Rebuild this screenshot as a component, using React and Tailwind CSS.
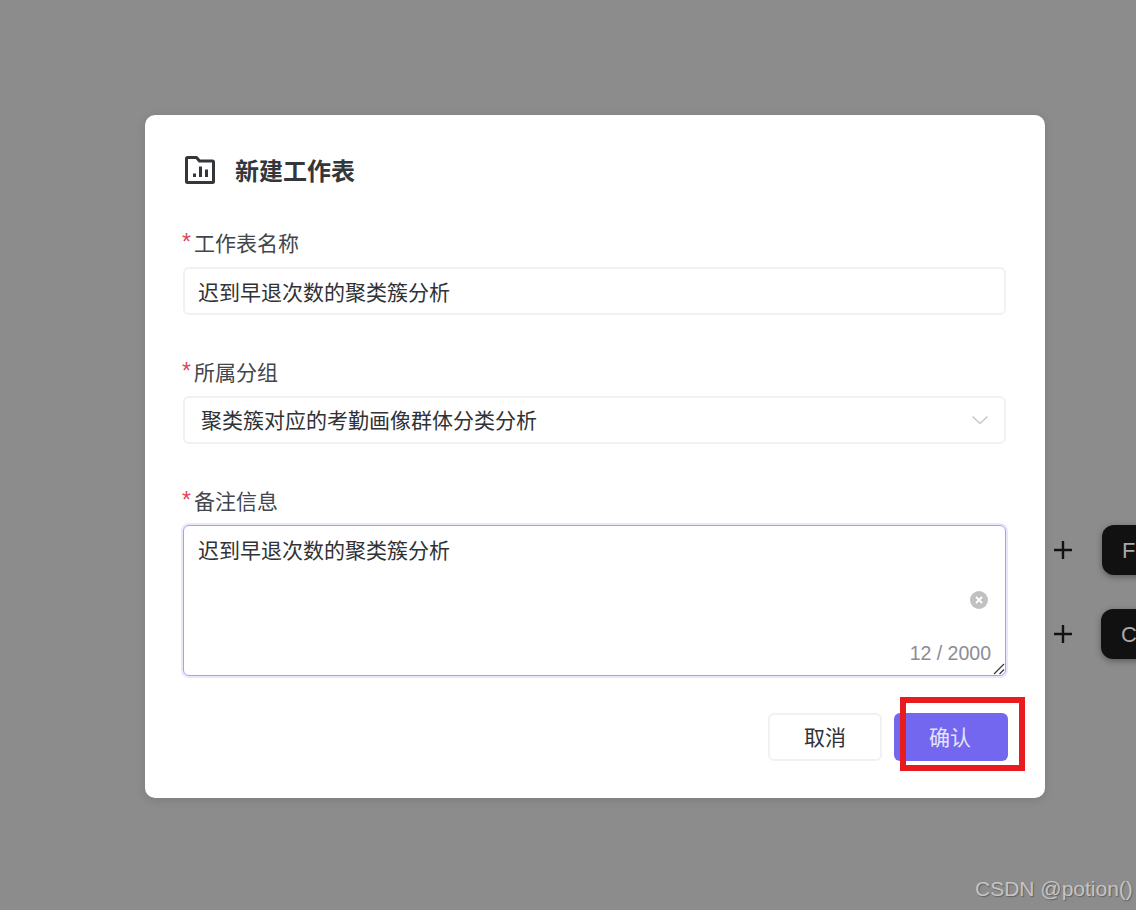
import React from 'react';

const cjk = "font-['Microsoft_YaHei','Noto_Sans_CJK_SC','Noto_Sans',sans-serif]";

const FolderChartIcon = () => (
  <svg width="30" height="28" viewBox="0 0 30 28" fill="none" className="shrink-0">
    <path d="M1.500 2.500 a1 1 0 0 1 1-1 H11.500 L14.500 5 H27.500 a1 1 0 0 1 1 1 V25.500 a1 1 0 0 1-1 1 H2.500 a1 1 0 0 1-1-1 Z" stroke="#33363b" strokeWidth="3" strokeLinejoin="round" />
    <path d="M9.500 17.500v3.500M15.500 10.500v10.500M21.500 13.500v7.500" stroke="#33363b" strokeWidth="3" />
  </svg>
);

const Label = ({ children, className = '' }) => (
  <div className={`flex items-center h-[30px] text-[21px] leading-[30px] text-[#43464c] ${className}`}>
    <span className="-ml-[1px] w-[12px] text-[#e0465a] text-[23px] font-['Liberation_Sans',sans-serif]">*</span>
    {children}
  </div>
);

const Chip = ({ letter, offset, className }) => (
  <div className={`absolute flex items-center ${offset} ${className}`}>
    <svg width="20" height="20" viewBox="0 0 20 20" className="shrink-0">
      <path d="M10 1v18M1 10h18" stroke="#111214" strokeWidth="2.400" />
    </svg>
    <div className="w-[80px] h-[50px] rounded-[12px] bg-[#111111] shadow-[0_2px_6px_rgba(0,0,0,0.35)] flex items-center pl-[20px] text-[22px] text-[#a8a8a8] font-['Liberation_Sans',sans-serif]">
      {letter}
    </div>
  </div>
);

export default function App() {
  return (
    <div className={`relative w-[1136px] h-[910px] overflow-hidden bg-[#8c8c8c] pt-[115px] pl-[145px] ${cjk}`}>
      <Chip letter="F" offset="gap-[29px]" className="left-[1053px] top-[525px]" />
      <Chip letter="C" offset="gap-[28px]" className="left-[1053px] top-[609px]" />

      <div className="relative w-[900px] h-[683px] bg-white rounded-[10px] shadow-[0_2px_10px_rgba(0,0,0,0.12)] pt-[40px] pl-[38px] pr-[37px]">
        <div className="flex items-center h-[30px] pl-[2px] gap-[20px]">
          <FolderChartIcon />
          <h2 className="text-[24px] font-bold leading-[30px] text-[#33363b]">新建工作表</h2>
        </div>

        <Label className="mt-[42px]">工作表名称</Label>
        <div className="mt-[10px] w-[823px] h-[48px] rounded-[6px] border-2 border-[#f0f1f3] flex items-center px-[13px] pt-[1px] text-[21px] text-[#303236]">
          迟到早退次数的聚类簇分析
        </div>

        <Label className="mt-[41px]">所属分组</Label>
        <div className="mt-[10px] w-[823px] h-[48px] rounded-[6px] border-2 border-[#f0f1f3] flex items-center justify-between pl-[16px] pr-[15px] text-[21px] text-[#303236]">
          <span>聚类簇对应的考勤画像群体分类分析</span>
          <svg width="18" height="12" viewBox="0 0 18 12" fill="none">
            <path d="M1.500 2.500 9 9.500l7.500-7" stroke="#c9cacc" strokeWidth="1.600" />
          </svg>
        </div>

        <Label className="mt-[41px]">备注信息</Label>
        <div className="relative mt-[10px] w-[823px] h-[151px] rounded-[6px] border border-[#a89ef5] shadow-[0_0_0_2px_#e9e7fc] px-[14px] pt-[8px] text-[21px] leading-[30px] text-[#303236]">
          迟到早退次数的聚类簇分析
          <span className="absolute right-[17px] top-[65px] w-[18px] h-[18px] rounded-full bg-[#c1c1c1] flex items-center justify-center">
            <svg width="8" height="8" viewBox="0 0 8 8">
              <path d="M1 1l6 6M7 1l-6 6" stroke="#fff" strokeWidth="1.800" />
            </svg>
          </span>
          <span className="absolute right-[14px] bottom-[9px] text-[19.500px] leading-[26px] text-[#8b8d93] font-['Liberation_Sans',sans-serif]">12 / 2000</span>
          <svg width="12" height="12" viewBox="0 0 12 12" className="absolute right-0 bottom-0">
            <path d="M1 11 11 1M6.500 11 11 6.500" stroke="#33363b" strokeWidth="1.200" />
          </svg>
        </div>

        <div className="mt-[37px] flex justify-end gap-[12px]">
          <button className="w-[114px] h-[48px] rounded-[6px] border-2 border-[#f0f1f3] bg-white text-[21px] text-[#303236]">取消</button>
          <button className="w-[114px] h-[48px] rounded-[6px] bg-[#7367f0] text-[21px] text-[#e6e4fb] pr-[2px]">确认</button>
        </div>
      </div>

      {/* annotation drawn over the screenshot */}
      <div className="absolute left-[900px] top-[697px] w-[125px] h-[74px] border-[6px] border-[#e81c1f]" />

      <div className="absolute left-[975px] top-[875px] text-[21px] leading-[28px] text-[#c4c4c4] [text-shadow:1px_1px_1px_rgba(70,70,70,0.6)] font-['Liberation_Sans',sans-serif]">
        CSDN @potion()
      </div>
    </div>
  );
}
